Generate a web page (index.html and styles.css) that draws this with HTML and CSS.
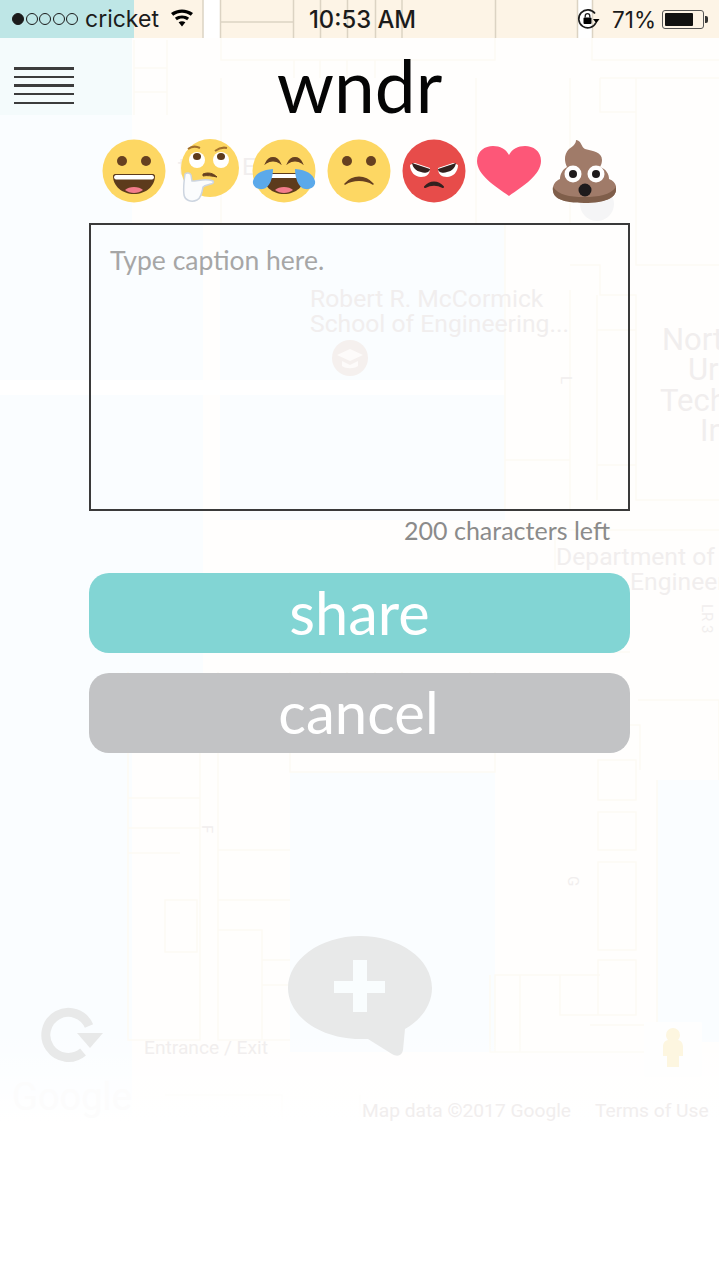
FILE: index.html
```html
<!DOCTYPE html>
<html lang="en">
<head>
    <meta charset="UTF-8">
    <meta name="viewport" content="width=device-width, initial-scale=1.0">
    <title>wndr</title>
    <link rel="stylesheet" href="styles.css">
</head>
<body>
    <div id="wrapper">
        <!-- faded map behind the form -->
        <svg class="map" width="719" height="1280" viewBox="0 0 719 1280">
            <defs>
                <linearGradient id="fade" x1="0" y1="0" x2="0" y2="1">
                    <stop offset="0" stop-color="#fff" stop-opacity="0"/>
                    <stop offset="1" stop-color="#fff" stop-opacity="1"/>
                </linearGradient>
            </defs>
            <rect class="land" x="0" y="38" width="719" height="1084"/>
            <rect class="water" x="0" y="38" width="132" height="1084"/>
            <rect class="waterTop" x="0" y="38" width="132" height="77"/>
            <rect class="water" x="132" y="225" width="71" height="155"/>
            <rect class="water" x="220" y="225" width="285" height="155"/>
            <rect class="water" x="132" y="395" width="71" height="357"/>
            <rect class="water" x="220" y="395" width="285" height="125"/>
            <rect class="water" x="290" y="772" width="205" height="280"/>
            <rect class="water" x="657" y="780" width="62" height="262"/>
            <rect class="road" x="0" y="380" width="505" height="15"/>
            <path class="cells" d="M134 40V115M167 40V115M134 68H167M134 92H167M221 38V60H495V38M221 78V225M294 60V78M320 60V78M347 60V78M375 60V78M402 60V78M476 78V225M570 78V225M592 38V60H719M600 78H719M636 78V265H719M600 78V112H636M505 225V510H570V290M570 265H600V295H636V500H719M597 295V500M597 330H636M597 465H636V500M505 460H570M520 530H719M555 530V570M638 700H719V780M657 780V1040M600 725H640V770M598 760H636V800H598ZM598 812H636V850H598ZM598 862H636V950H598ZM598 960H636V1015H598ZM128 752H200V1040H128ZM128 798H200M128 828H200M128 853H180M165 900H197V952H165ZM218 752V1040H290M218 850H290M218 900H290M218 930H262V1040M262 960H290M262 985H290M128 652H630M128 672V752M218 672V752M290 672V772H495V672M320 672V752M347 672V752M375 672V752M402 672V752M470 672V752M495 1052V975H600M490 975V1052H645M520 975V1052M560 975V1015H636M590 1025H645V1052M165 1095H282V1120M360 1095V1122"/>
            <rect class="fade" x="0" y="1030" width="719" height="92"/>
            <circle class="pin faintPin" cx="597" cy="204" r="17"/>
            <circle class="pin" cx="350" cy="358" r="18"/>
            <path class="cap" d="M350 349l13 6-13 6-13-6zM342 361v5c4 3 12 3 16 0v-5l-8 4z"/>
            <text class="mapText" x="178" y="175">tti</text>
            <text class="mapText" x="242" y="175">E</text>
            <text class="mapText" x="310" y="307">Robert R. McCormick</text>
            <text class="mapText" x="310" y="332">School of Engineering...</text>
            <text class="mapText big" x="662" y="350">Nort</text>
            <text class="mapText big" x="688" y="380">Ur</text>
            <text class="mapText big" x="660" y="411">Tech</text>
            <text class="mapText big" x="700" y="441">In</text>
            <text class="mapText" x="556" y="565">Department of</text>
            <text class="mapText" x="630" y="590">Engineer</text>
            <text class="mapText tiny" transform="translate(702 604) rotate(90)">LR 3</text>
            <text class="mapText tiny" transform="translate(561 376) rotate(90)">L</text>
            <text class="mapText tiny" transform="translate(202 825) rotate(90)">F</text>
            <text class="mapText tiny" transform="translate(568 876) rotate(90)">G</text>
            <text class="mapText small" x="144" y="1054">Entrance / Exit</text>
            <text class="mapText google" x="12" y="1110">Google</text>
            <text class="mapText small" x="362" y="1117">Map data ©2017 Google</text>
            <text class="mapText small" x="595" y="1117">Terms of Use</text>
            <!-- refresh -->
            <path class="faintStroke" d="M89 1026A22.500 22.500 0 1 0 83 1052"/>
            <path class="faintIcon" d="M77 1033H103L90 1048z"/>
            <!-- add bubble -->
            <path class="faintIcon" d="M360 936c40 0 72 23 72 52 0 17-11 32-27 41l-2 21c-1 6-6 7-11 4l-24-15c-3 0-5 0-8 0-40 0-72-23-72-51s32-52 72-52z"/>
            <path class="plus" d="M353 960h14v21h18v12h-18v19h-14v-19h-19v-12h19z"/>
            <!-- pegman -->
            <rect class="pegBox" x="644" y="1022" width="58" height="55" rx="2"/>
            <path class="peg" d="M673 1028a7 7 0 0 1 7 7c0 2-1 4-2 5 4 1 5 4 5 7v9h-4v11h-12v-11h-4v-9c0-3 1-6 5-7-1-1-2-3-2-5a7 7 0 0 1 7-7z"/>
        </svg>

        <div class="statusBar">
            <span class="statusTint"></span>
            <svg class="statusLines" width="719" height="38" viewBox="0 0 719 38">
                <path d="M220.500 0V38M293.500 0V38M320.500 0V38M347.500 0V38M375.500 0V38M402 0V38M495.500 0V38M577.500 0V38M592.500 0V38M221 22H293M203 0V38"/>
            </svg>
            <div class="statusLeft">
                <span class="dots">
                    <i class="dot on"></i><i class="dot"></i><i class="dot"></i><i class="dot"></i><i class="dot"></i>
                </span>
                <span>cricket</span>
                <svg width="24" height="18" viewBox="0 0 24 18">
                    <path d="M12 17.500l-3.400-4.200c2-1.500 4.800-1.500 6.800 0zM6.900 11.200l-2-2.400c4.200-3.200 10-3.200 14.200 0l-2 2.400c-3-2.200-7.200-2.200-10.200 0zM3.200 6.700l-2.200-2.600c6.400-4.900 15.600-4.900 22 0l-2.200 2.600c-5.200-3.900-12.400-3.900-17.600 0z"/>
                </svg>
            </div>
            <div class="statusTime">10:53 AM</div>
            <div class="statusRight">
                <svg width="26" height="22" viewBox="0 0 26 22">
                    <path class="lockRing" d="M19 5.500a9 9 0 1 0 1 9"/>
                    <path d="M17 11l6.500 0-3.200 4.200z"/>
                    <rect x="7.500" y="9.500" width="8" height="6.500" rx="1"/>
                    <path class="lockRing thin" d="M9.200 9.500V8a2.300 2.300 0 0 1 4.600 0v1.500"/>
                </svg>
                <span class="percent">71%</span>
                <span class="battery"><span class="batteryLevel"></span></span>
                <span class="batteryTip"></span>
            </div>
        </div>

        <header class="topBar">
            <button class="menuBtn" aria-label="menu"><i></i><i></i><i></i><i></i><i></i></button>
            <h1>wndr</h1>
        </header>

        <div class="emojis">
            <svg class="emoji" viewBox="0 0 64 64">
                <circle cx="32" cy="32" r="31.500" fill="#fdd763"/>
                <circle cx="20" cy="22" r="5" fill="#664020"/>
                <circle cx="44" cy="22" r="5" fill="#664020"/>
                <path d="M13 35h38c1 0 2 1 2 2 0 10-9 18-21 18S11 47 11 37c0-1 1-2 2-2z" fill="#5d3b1c"/>
                <path d="M14 36h36c1 0 2 1 2 2.300s-1 2.200-2 2.200H14c-1 0-2-1-2-2.200s1-2.300 2-2.300z" fill="#fff"/>
                <path d="M23 51c4-4 14-4 18 0-5 4-13 4-18 0z" fill="#f27c8c"/>
            </svg>
            <svg class="emoji" viewBox="0 0 64 64">
                <circle cx="33" cy="29" r="29" fill="#fdd763"/>
                <circle cx="20" cy="21" r="8" fill="#fff"/>
                <circle cx="44" cy="21" r="8" fill="#fff"/>
                <ellipse cx="20" cy="17.500" rx="4" ry="3.500" fill="#5d3b1c"/>
                <ellipse cx="44" cy="17.500" rx="4" ry="3.500" fill="#5d3b1c"/>
                <path d="M11 10c4-3 8-3 12-1M38 12c4-3 8-4 12-3" fill="none" stroke="#a2702c" stroke-width="2"/>
                <path d="M26 35c5-2 10-1 14 3-5-1-10-2-14-1z" fill="#664020" stroke="#664020"/>
                <path d="M8 35c2-2 5-1 6 1l1 6c6 0 14-3 21 0 1 1 0 3-2 3-3 1-6 1-8 3-1 6-2 11-6 13-6 3-12 0-13-5-1-7 0-14 1-21z" fill="#fbfcfd" stroke="#cdd5e0" stroke-width="1.500"/>
            </svg>
            <svg class="emoji" viewBox="0 0 64 64">
                <circle cx="32" cy="32" r="31.500" fill="#fdd763"/>
                <path d="M14 24c3-7 11-7 14 0-4-3-10-3-14 0zM36 24c3-7 11-7 14 0-4-3-10-3-14 0z" fill="#664020" stroke="#664020" stroke-width="1.500"/>
                <path d="M13 34h38c1 0 2 1 2 2 0 11-9 19-21 19S11 47 11 36c0-1 1-2 2-2z" fill="#5d3b1c"/>
                <path d="M14 35h36c1 0 2 1 2 2v2H12v-2c0-1 1-2 2-2z" fill="#fff"/>
                <path d="M23 51c4-4 14-4 18 0-5 4-13 4-18 0z" fill="#f27c8c"/>
                <path d="M1 42c2-7 8-11 20-12 0 8-3 19-10 20-6 1-11-3-10-8zM63 42c-2-7-8-11-20-12 0 8 3 19 10 20 6 1 11-3 10-8z" fill="#5ba9ea"/>
            </svg>
            <svg class="emoji" viewBox="0 0 64 64">
                <circle cx="32" cy="32" r="31.500" fill="#fdd763"/>
                <circle cx="20" cy="22" r="5" fill="#664020"/>
                <circle cx="44" cy="22" r="5" fill="#664020"/>
                <path d="M18 45c8-9 20-9 28 0-8-5-20-5-28 0z" fill="#664020" stroke="#664020" stroke-width="1.500" stroke-linejoin="round"/>
            </svg>
            <svg class="emoji" viewBox="0 0 64 64">
                <circle cx="32" cy="32" r="31.500" fill="#e74c4a"/>
                <path d="M8 26c2-1 3-2 5-2l15 5c0 6-3 9-9 9-6 0-11-5-11-12zM56 26c-2-1-3-2-5-2l-15 5c0 6 3 9 9 9 6 0 11-5 11-12z" fill="#fff"/>
                <path d="M10 24l18 6c0 3-5 5-9 3-5-1-8-4-9-9zM54 24l-18 6c0 3 5 5 9 3 5-1 8-4 9-9z" fill="#33211f"/>
                <path d="M23 48c5-6 13-6 18 0-6-3-12-3-18 0z" fill="#33211f" stroke="#33211f" stroke-width="2" stroke-linejoin="round"/>
            </svg>
            <svg class="emoji" viewBox="0 0 64 64">
                <path d="M32 57C18 47 0 36 0 22 0 12 8 7 16 7c7 0 13 3 16 9 3-6 9-9 16-9 8 0 16 5 16 15 0 14-18 25-32 35z" fill="#fd5778"/>
            </svg>
            <svg class="emoji" viewBox="0 0 64 64">
                <path d="M24 1c6 1 5 7 9 9 8 2 17 3 17 11 0 3-1 5-2 7 6 2 9 7 9 12 6 2 8 7 7 12-2 8-10 11-32 11S2 60 1 52c-1-5 2-10 7-12 0-5 3-10 7-12-3-6-3-13 2-18 4-3 7-5 7-9z" fill="#a07b69"/>
                <path d="M1 48c6 8 16 10 31 10s26-2 32-10c1 8-5 16-32 16C4 64 0 56 1 48z" fill="#7f5e4a"/>
                <circle cx="21" cy="35" r="8.500" fill="#fff"/>
                <circle cx="44" cy="35" r="8.500" fill="#fff"/>
                <circle cx="21" cy="35" r="4" fill="#1e1b1c"/>
                <circle cx="44" cy="35" r="4" fill="#1e1b1c"/>
                <circle cx="33" cy="51" r="6.500" fill="#1e1b1c"/>
            </svg>
        </div>

        <main class="captionForm">
            <textarea class="caption" placeholder="Type caption here."></textarea>
            <div class="counter">200 characters left</div>
            <button class="btn share">share</button>
            <button class="btn cancel">cancel</button>
        </main>
    </div>
</body>
</html>
```
FILE: styles.css
```css
*{
    box-sizing: border-box;
}
html, body{
    margin: 0;
    padding: 0;
    background-color: white;
}
#wrapper{
    position: relative;
    width: 719px;
    height: 1280px;
    overflow: hidden;
    font-family: "Lato", sans-serif;
}
.map{
    position: absolute;
    left: 0;
    top: 0;
}
.land{
    fill: #fffefd;
}
.water{
    fill: #fafdff;
}
.waterTop{
    fill: #f4fbfc;
}
.road{
    fill: #ffffff;
}
.cells{
    fill: none;
    stroke: #fdfaf4;
    stroke-width: 1.5;
}
.fade{
    fill: url(#fade);
}
.pin{
    fill: #f5f0ee;
}
.faintPin{
    fill: #f5f5f6;
}
.cap{
    fill: #fdfbfa;
}
.mapText{
    font-family: "Roboto", sans-serif;
    font-size: 24.7px;
    fill: #f1eeee;
}
.mapText.big{
    font-size: 31px;
}
.mapText.tiny{
    font-size: 15px;
}
.mapText.small{
    font-size: 19.2px;
}
.mapText.google{
    font-size: 38px;
    fill: #fcfcfc;
}
.faintIcon{
    fill: #e8e9e9;
}
.faintStroke{
    fill: none;
    stroke: #e8e9e9;
    stroke-width: 9;
}
.plus{
    fill: #f9fdfe;
}
.pegBox{
    fill: #fefefe;
}
.peg{
    fill: #fdf6e0;
}

.statusBar{
    position: relative;
    height: 38px;
    display: grid;
    grid-template-columns: 1fr auto 1fr;
    align-items: center;
    font-family: "Inter", sans-serif;
    font-size: 23px;
    color: #1b1b1b;
    background: linear-gradient(to right, #fdf4e6 203px, #ffffff 203px, #ffffff 220px, #fdf4e6 220px, #fdf4e6 577px, #ffffff 577px, #ffffff 592px, #fdf4e6 592px);
}
.statusTint{
    position: absolute;
    left: 0;
    top: 0;
    width: 134px;
    height: 38px;
    background-color: #bee6e6;
}
.statusLines{
    position: absolute;
    left: 0;
    top: 0;
}
.statusLines path{
    fill: none;
    stroke: #dcd3c3;
    stroke-width: 1.5;
}
.statusLeft, .statusRight, .statusTime{
    position: relative;
    display: flex;
    align-items: center;
}
.statusLeft{
    padding-left: 12px;
}
.statusLeft svg{
    margin-left: 11px;
    margin-top: -2px;
}
.statusRight{
    justify-content: flex-end;
    padding-right: 11px;
}
.percent{
    margin-left: 10px;
    margin-right: 6px;
    font-size: 22.5px;
}
.statusTime{
    font-weight: 500;
    font-size: 23.8px;
    padding-left: 6px;
}
.dots{
    display: flex;
    gap: 1.5px;
    margin-right: 7px;
}
.dot{
    width: 12px;
    height: 12px;
    border: 1px solid #1b1b1b;
    border-radius: 50%;
}
.dot.on{
    background-color: #1b1b1b;
}
.lockRing{
    fill: none;
    stroke: #1b1b1b;
    stroke-width: 1.6;
}
.lockRing.thin{
    stroke-width: 1.3;
}
.battery{
    display: block;
    width: 42px;
    height: 19px;
    padding: 2px;
    border: 1px solid #555;
    border-radius: 3px;
}
.batteryLevel{
    display: block;
    width: 77%;
    height: 100%;
    background-color: #111;
    border-radius: 1px;
}
.batteryTip{
    display: block;
    width: 3px;
    height: 7px;
    margin-left: 1px;
    background-color: #333;
    border-radius: 0 2px 2px 0;
}

.topBar{
    position: relative;
    height: 91px;
    display: flex;
    justify-content: center;
}
.menuBtn{
    position: absolute;
    left: 14px;
    top: 29px;
    width: 60px;
    height: 37px;
    padding: 0;
    border: none;
    background: none;
    display: flex;
    flex-direction: column;
    justify-content: space-between;
}
.menuBtn i{
    display: block;
    height: 2.5px;
    background-color: #3c3c3c;
}
h1{
    margin: 0;
    font-size: 73px;
    font-weight: 400;
    line-height: 94px;
    color: #050505;
}

.emojis{
    position: relative;
    margin-top: 10px;
    padding-right: 2px;
    display: flex;
    justify-content: center;
    gap: 11px;
}
.emoji{
    display: block;
    width: 64px;
    height: 64px;
}

.captionForm{
    position: relative;
    width: 541px;
    margin: 20px 0 0 89px;
    display: flex;
    flex-direction: column;
}
.caption{
    display: block;
    width: 100%;
    height: 288px;
    padding: 17px 19px;
    border: 2px solid #3a3a3a;
    border-radius: 0;
    background: none;
    resize: none;
    font-family: "Lato", sans-serif;
    font-size: 26.5px;
    line-height: 36px;
}
.caption::placeholder{
    color: #a6a6a6;
    opacity: 1;
}
.counter{
    margin-top: 4px;
    padding-right: 20px;
    text-align: right;
    font-size: 25px;
    line-height: 30px;
    color: #8b8b8b;
}
.btn{
    display: block;
    width: 100%;
    height: 80px;
    margin-top: 20px;
    border: none;
    border-radius: 20px;
    color: white;
    font-family: "Lato", sans-serif;
    font-size: 58px;
    padding: 0 2px 3px 0;
}
.share{
    margin-top: 28px;
    font-size: 59.5px;
    padding: 0 0 2px 0;
    background-color: #82d5d4;
}
.cancel{
    background-color: #c2c3c5;
}
```
